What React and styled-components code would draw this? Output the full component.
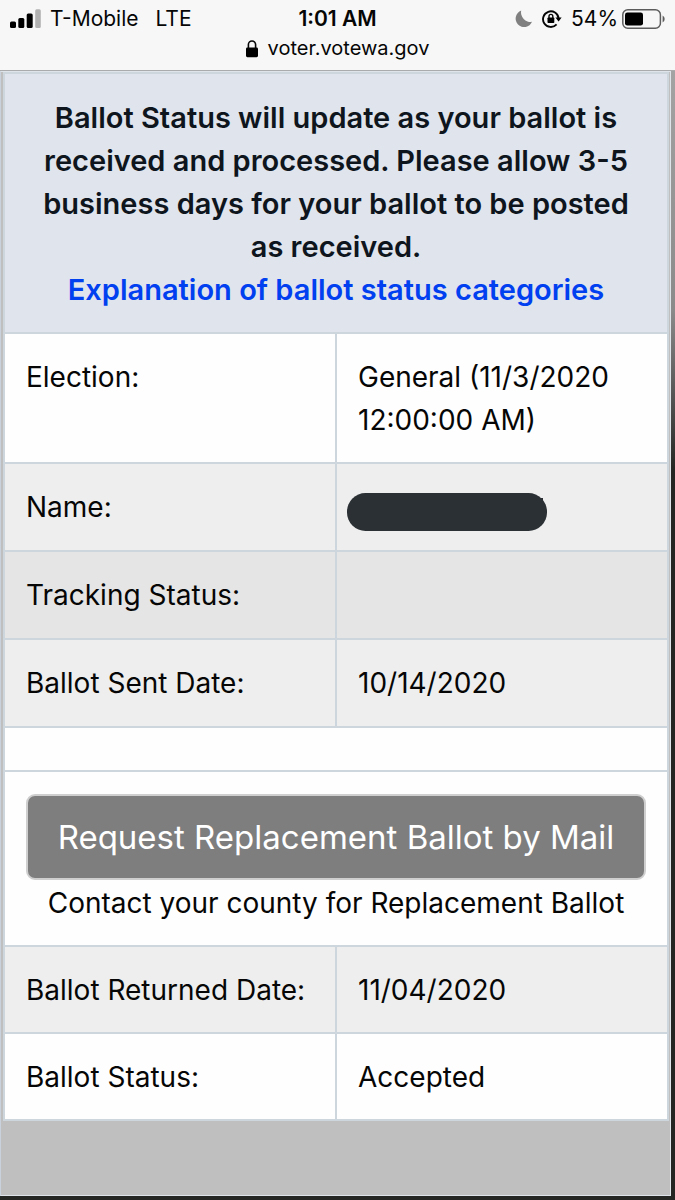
import React from "react"
import styled, { createGlobalStyle } from "styled-components"

const GlobalStyle = createGlobalStyle`
  * {
    box-sizing: border-box;
  }
  body {
    margin: 0;
    font-family: Inter, "Liberation Sans", sans-serif;
    color: #060606;
  }
`

const SignalIcon = () => (
  <svg width="31" height="20" viewBox="0 0 31 20" aria-hidden="true">
    <rect x="0" y="12.5" width="6" height="6.5" rx="1.5" />
    <rect x="8.3" y="9" width="6" height="10" rx="1.5" />
    <rect x="16.7" y="4.5" width="6" height="14.5" rx="1.5" />
    <rect x="25.2" y="0.3" width="5.6" height="18.7" rx="1.5" fill="#b1b1b1" />
  </svg>
)

const MoonIcon = () => (
  <svg width="18" height="18" viewBox="0 0 18 18" aria-hidden="true">
    <path
      d="M6.2 0.6A8.5 8.5 0 1 0 17 11.8A9.5 9.5 0 0 1 6.2 0.6Z"
      fill="#808080"
    />
  </svg>
)

const RotationLockIcon = () => (
  <svg width="20" height="18" viewBox="0 0 20 18" aria-hidden="true">
    <path
      d="M14.6 14.4A7.8 7.8 0 1 1 16.6 8.4"
      fill="none"
      stroke="#060606"
      strokeWidth="1.9"
    />
    <path d="M13.4 7.6H19.6L16.6 11.6Z" />
    <rect x="5.5" y="7.6" width="6.8" height="5.4" rx="0.7" />
    <path
      d="M7 8V6.3A1.9 1.9 0 0 1 10.8 6.3V8"
      fill="none"
      stroke="#060606"
      strokeWidth="1.4"
    />
  </svg>
)

const BatteryIcon = () => (
  <svg width="43" height="20" viewBox="0 0 43 20" aria-hidden="true">
    <rect
      x="0.8"
      y="0.8"
      width="37.6"
      height="18.4"
      rx="5"
      fill="none"
      stroke="#5c5c5c"
      strokeWidth="1.5"
    />
    <rect x="3" y="3.4" width="18" height="13.2" rx="2.4" />
    <path d="M40.6 6.6A3.8 3.8 0 0 1 40.6 13.4Z" fill="#5c5c5c" />
  </svg>
)

const LockIcon = () => (
  <svg width="12" height="18" viewBox="0 0 12 18" aria-hidden="true">
    <rect x="0" y="7.6" width="12" height="9.6" rx="1.4" />
    <path
      d="M2.4 8.4V4.6A3.6 3.6 0 0 1 9.6 4.6V8.4"
      fill="none"
      stroke="#060606"
      strokeWidth="1.6"
    />
  </svg>
)

const App = () => (
  <Page>
    <GlobalStyle />
    <BrowserBar>
      <StatusRow>
        <StatusGroup>
          <SignalIcon />
          <Carrier>T-Mobile</Carrier>
          <span>LTE</span>
        </StatusGroup>
        <Clock>1:01 AM</Clock>
        <StatusGroup $end>
          <MoonIcon />
          <RotationLockIcon />
          <Battery>
            54%
            <BatteryIcon />
          </Battery>
        </StatusGroup>
      </StatusRow>
      <Address>
        <LockIcon />
        voter.votewa.gov
      </Address>
    </BrowserBar>
    <Backdrop>
      <Panel>
        <BallotTable>
          <thead>
            <tr>
              <Notice colSpan={2} scope="colgroup">
                Ballot Status will update as your ballot is received and
                processed. Please allow 3-5 business days for your ballot to be
                posted as received.
                <NoticeLink href="#categories">
                  Explanation of ballot status categories
                </NoticeLink>
              </Notice>
            </tr>
          </thead>
          <tbody>
            <Row>
              <Label scope="row">Election:</Label>
              <Cell>General (11/3/2020 12:00:00 AM)</Cell>
            </Row>
            <Row $bg="#eeeeee" $roomy>
              <Label scope="row">Name:</Label>
              <Cell>
                <Redaction viewBox="0 0 200 38" role="img" aria-label="Hidden">
                  <rect width="200" height="38" rx="18.5" />
                  <rect x="193" y="5" width="3" height="5" />
                </Redaction>
              </Cell>
            </Row>
            <Row $bg="#e5e5e5" $roomy>
              <Label scope="row">Tracking Status:</Label>
              <Cell />
            </Row>
            <Row $bg="#eeeeee" $roomy>
              <Label scope="row">Ballot Sent Date:</Label>
              <Cell>10/14/2020</Cell>
            </Row>
            <Row>
              <Cell colSpan={2} />
            </Row>
            <Row>
              <Cell colSpan={2} $center>
                <RequestButton type="button">
                  Request Replacement Ballot by Mail
                </RequestButton>
                Contact your county for Replacement Ballot
              </Cell>
            </Row>
            <Row $bg="#eeeeee">
              <Label scope="row">Ballot Returned Date:</Label>
              <Cell>11/04/2020</Cell>
            </Row>
            <Row>
              <Label scope="row">Ballot Status:</Label>
              <Cell>Accepted</Cell>
            </Row>
          </tbody>
        </BallotTable>
      </Panel>
    </Backdrop>
  </Page>
)

export default App

const Page = styled.div`
  display: flex;
  flex-direction: column;
  min-height: 100vh;
`

const BrowserBar = styled.header`
  padding: 5px 10px 6px;
  background: #f7f7f7;
  border-bottom: 1px solid #a9abad;
`

const StatusRow = styled.div`
  display: grid;
  grid-template-columns: 1fr auto 1fr;
  align-items: center;
  font-size: 21px;
  line-height: 28px;
`

const StatusGroup = styled.div`
  display: flex;
  align-items: center;
  justify-content: ${props => (props.$end ? "flex-end" : "flex-start")};
  gap: 9px;
`

const Carrier = styled.span`
  margin-right: 8px;
`

const Clock = styled.time`
  font-weight: 600;
`

const Battery = styled.span`
  display: flex;
  align-items: center;
  gap: 4px;
`

const Address = styled.div`
  display: flex;
  align-items: center;
  justify-content: center;
  gap: 10px;
  font-size: 20px;
  line-height: 31px;
`

const Backdrop = styled.main`
  display: flex;
  flex: 1;
  padding: 0 4px 4px 0;
  background: linear-gradient(#a3a3a3, #8a8a8a 240px, #242624 400px);
`

const Panel = styled.div`
  flex: 1;
  padding: 0 1px 0 2px;
  background: #bfbfbf;
  border: 1px solid #dfe4ea;
  border-left: 1px solid #c8d1dc;
`

const BallotTable = styled.table`
  width: 100%;
  table-layout: fixed;
  border-collapse: collapse;
  font-size: 28px;
  line-height: 43px;
`

const Row = styled.tr`
  background: ${props => props.$bg || "#fefefe"};

  > * {
    padding: 22px 21px;
    padding-bottom: ${props => (props.$roomy ? "21px" : "20px")};
  }
`

const Cell = styled.td`
  border: 2px solid #cdd5dd;
  text-align: ${props => (props.$center ? "center" : "left")};
  vertical-align: top;
`

const Label = styled.th`
  border: 2px solid #cdd5dd;
  font-weight: 400;
  text-align: left;
  vertical-align: top;
`

const Notice = styled.th`
  padding: 22px 21px 21px;
  background: #e0e4ec;
  border: 2px solid #cdd5dd;
  color: #0e151d;
  font-size: 29px;
  font-weight: 600;
  text-align: center;
`

const NoticeLink = styled.a`
  display: block;
  color: #0040f0;
  text-decoration: none;
`

const Redaction = styled.svg`
  display: block;
  width: 200px;
  height: 38px;
  margin: 7px 0 -3px -11px;
  fill: #2b3034;
`

const RequestButton = styled.button`
  display: block;
  width: 100%;
  height: 86px;
  margin-bottom: 2px;
  padding: 0;
  background: #7e7e7e;
  border: 2px solid #cfcfcf;
  border-radius: 9px;
  color: #ffffff;
  font-family: inherit;
  font-size: 33px;
  font-weight: 400;
`
